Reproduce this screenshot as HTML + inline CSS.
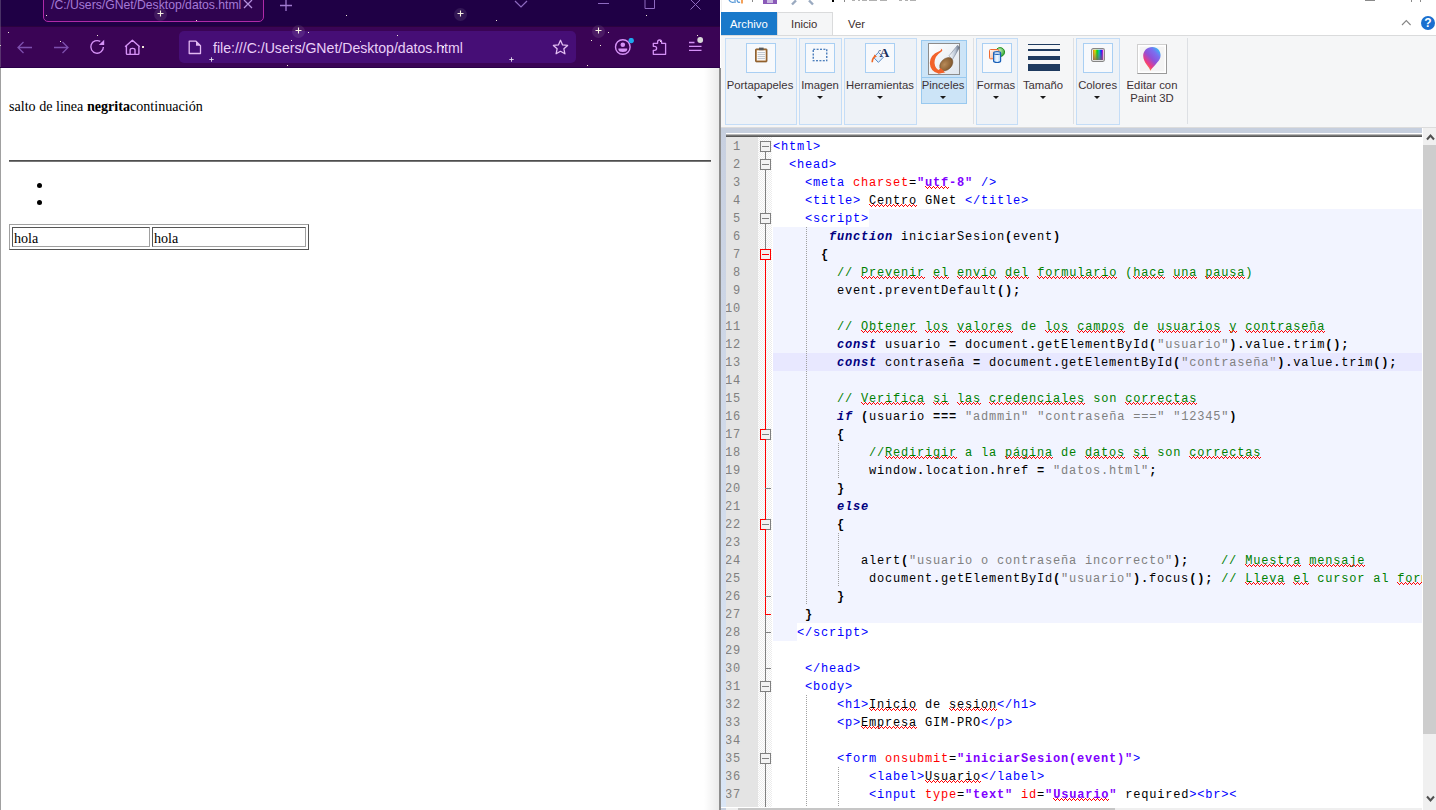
<!DOCTYPE html>
<html><head><meta charset="utf-8"><style>
*{margin:0;padding:0;box-sizing:border-box}
html,body{width:1436px;height:810px;overflow:hidden;background:#fff;position:relative;font-family:"Liberation Sans",sans-serif}
.a{position:absolute}
#br{left:0;top:0;width:720px;height:810px;overflow:hidden;background:#fff}
.tabt{font-size:12.2px;color:#a57ad6;white-space:nowrap}
.urlt{font-size:14.1px;color:#ead0f6;white-space:nowrap;letter-spacing:0px}
.serif{font-family:"Liberation Serif",serif;font-size:14.1px;color:#000;white-space:nowrap;line-height:16px}
.star{background:#fff;width:2px;height:2px}
#pt{left:720px;top:0;width:716px;height:810px;background:#fff;overflow:hidden}
.seg{font-size:11.3px;color:#3c3236;white-space:nowrap;line-height:13px}
.grp{border:1px solid #c4ddf7;background:#eef2f7}
.ib{border:1px solid #a9cff3;background:#f7f9fc}
.arr{width:0;height:0;border-left:3.5px solid transparent;border-right:3.5px solid transparent;border-top:3.5px solid #1a1a1a}
.sep{width:1px;background:#dde0e4}
.ln{position:absolute;left:-6px;width:21px;text-align:right;font-family:"Liberation Mono",monospace;font-size:12px;letter-spacing:0.8px;color:#808080;height:18px;line-height:18px}
.cl{position:absolute;left:773px;font-family:"Liberation Mono",monospace;font-size:12px;letter-spacing:0.8px;height:18px;line-height:18px;white-space:pre;color:#000}
.t{color:#0000ff}.at{color:#ff0000}.ds{color:#8000ff;font-weight:bold}.tx{color:#000}
.kw{color:#000080;font-weight:bold;font-style:italic}.cm{color:#008000}.st{color:#808080}.sy{font-weight:bold;color:#000}.w{color:#000}
.sp{text-decoration:underline wavy #ff0000;text-decoration-thickness:1px;text-underline-offset:2px;text-decoration-skip-ink:none}
</style></head><body>
<div id="br" class="a">
<div class="a" style="left:0px;top:0px;width:720px;height:26px;background:#1f0045"></div>
<div class="a" style="left:0px;top:26px;width:720px;height:42px;background:#3a0455"></div>
<div class="a" style="left:0px;top:26px;width:720px;height:1px;background:#2b023f"></div>
<div class="a" style="left:43px;top:-6px;width:221px;height:28px;border:1.5px solid #b02aa8;border-radius:5px;background:#2e034f"></div>
<div class="a tabt" style="left:51px;top:-2px">/C:/Users/GNet/Desktop/datos.html</div>
<svg class="a" style="left:243px;top:0" width="10" height="10"><path d="M1 0L9 8M9 0L1 8" stroke="#b48fdc" stroke-width="1.3"/></svg>
<svg class="a" style="left:279px;top:0" width="14" height="12"><path d="M7 0V11M1 5.5H13" stroke="#a07ad0" stroke-width="1.3"/></svg>
<svg class="a" style="left:514px;top:0" width="14" height="8"><path d="M1 1L7 7L13 1" fill="none" stroke="#8e6ac0" stroke-width="1.2"/></svg>
<svg class="a" style="left:598px;top:0" width="12" height="6"><path d="M0 3.5H11" stroke="#8e6ac0" stroke-width="1"/></svg>
<svg class="a" style="left:644px;top:0" width="12" height="10"><path d="M1 -1V8.5H10.5V-1" fill="none" stroke="#8e6ac0" stroke-width="1"/></svg>
<svg class="a" style="left:690px;top:0" width="12" height="10"><path d="M0.5 -0.5L10.5 9.5M10.5 -0.5L0.5 9.5" stroke="#8e6ac0" stroke-width="1"/></svg>
<div class="a" style="left:179px;top:31px;width:397px;height:32px;border-radius:5px;background:#460e76"></div>
<div class="a urlt" style="left:213px;top:39.5px">file:///C:/Users/GNet/Desktop/datos.html</div>
<svg class="a" style="left:188px;top:40px" width="14" height="15"><path d="M1.2 1.2H8L12.5 5.7V13.5H1.2Z" fill="none" stroke="#e2b9f2" stroke-width="1.3" stroke-linejoin="round"/><path d="M8 1.2V5.7H12.5Z" fill="#e2b9f2"/></svg>
<svg class="a" style="left:17px;top:41px" width="16" height="13"><path d="M1 6.5H15M6.5 1L1 6.5L6.5 12" fill="none" stroke="#7d4fae" stroke-width="1.3"/></svg>
<svg class="a" style="left:53px;top:41px" width="16" height="13"><path d="M1 6.5H15M9.5 1L15 6.5L9.5 12" fill="none" stroke="#7d4fae" stroke-width="1.3"/></svg>
<svg class="a" style="left:89px;top:39px" width="17" height="17"><path d="M14.4 8A6.3 6.3 0 1 1 11.25 2.45" fill="none" stroke="#d592f6" stroke-width="1.35"/><path d="M9.8 6L15.2 0.8V6Z" fill="#d592f6"/></svg>
<svg class="a" style="left:124px;top:39px" width="17" height="17"><path d="M1.1 7.7L8.4 1.2L15.7 7.7M2.4 6.5V14.6Q2.4 15.4 3.2 15.4H14.1Q14.9 15.4 14.9 14.6V6.5M6.1 15.4V10.9Q6.1 9.4 8.55 9.4Q11 9.4 11 10.9V15.4" fill="none" stroke="#d592f6" stroke-width="1.4" stroke-linejoin="round"/></svg>
<svg class="a" style="left:552px;top:39px" width="17" height="17"><path d="M8.5 1.3L10.6 5.9L15.6 6.4L11.9 9.8L12.9 14.8L8.5 12.3L4.1 14.8L5.1 9.8L1.4 6.4L6.4 5.9Z" fill="none" stroke="#e3bff3" stroke-width="1.3" stroke-linejoin="round"/></svg>
<svg class="a" style="left:614px;top:38px" width="21" height="18"><circle cx="8.8" cy="9" r="7.3" fill="none" stroke="#d592f6" stroke-width="1.4"/><circle cx="8.8" cy="6.7" r="2.3" fill="#d592f6"/><path d="M4.4 10.6H13.2V11.4Q13 13.9 8.8 13.9Q4.6 13.9 4.4 11.4Z" fill="#d592f6"/><circle cx="17.2" cy="2.6" r="2.7" fill="#1ea8ee"/></svg>
<svg class="a" style="left:651px;top:38px" width="17" height="18"><path d="M2.3 5.3H6.6V4A2 2 0 0 1 10.6 4V5.3H14.6V16.3H2.3V12.3H3.6A2 2 0 0 0 3.6 8.3H2.3Z" fill="none" stroke="#d592f6" stroke-width="1.3" stroke-linejoin="round"/></svg>
<svg class="a" style="left:688px;top:37px" width="18" height="16"><path d="M1 5.5H6.5M1 9.3H13.5M1 13.4H13.5" stroke="#d592f6" stroke-width="1.3"/><circle cx="12.2" cy="3" r="2.9" fill="#d8d8d8"/></svg>
<div class="a" style="left:45.9px;top:14.5px;width:1.2px;height:1.2px;background:#f0e8d8"></div>
<div class="a" style="left:154.4px;top:7.8px;width:13px;height:13px;border-radius:50%;background:rgba(255,255,255,0.09)"></div>
<svg class="a" style="left:156.9px;top:10.3px" width="7" height="7"><path d="M3.5 0.5V6.5M0.5 3.5H6.5" stroke="#f4eee0" stroke-width="1.1"/></svg>
<div class="a" style="left:196.2px;top:19.5px;width:1.2px;height:1.2px;background:#f0e8d8"></div>
<div class="a" style="left:292.2px;top:24.6px;width:13px;height:13px;border-radius:50%;background:rgba(255,255,255,0.09)"></div>
<svg class="a" style="left:294.7px;top:27.1px" width="7" height="7"><path d="M3.5 0.5V6.5M0.5 3.5H6.5" stroke="#f4eee0" stroke-width="1.1"/></svg>
<div class="a" style="left:7.5px;top:32.0px;width:1.2px;height:1.2px;background:#f0e8d8"></div>
<div class="a" style="left:96.5px;top:35.0px;width:1.2px;height:1.2px;background:#f0e8d8"></div>
<div class="a" style="left:60.2px;top:40.9px;width:1.2px;height:1.2px;background:#f0e8d8"></div>
<div class="a" style="left:142.4px;top:46.4px;width:1.2px;height:1.2px;background:#f0e8d8"></div>
<div class="a" style="left:290.7px;top:40.0px;width:1.2px;height:1.2px;background:#f0e8d8"></div>
<svg class="a" style="left:208.8px;top:56.9px" width="5" height="5"><path d="M2.5 0.3V4.7M0.3 2.5H4.7" stroke="#e8e0f0" stroke-width="0.9"/></svg>
<div class="a" style="left:286.5px;top:65.2px;width:1.2px;height:1.2px;background:#f0e8d8"></div>
<div class="a" style="left:0.0px;top:45.0px;width:1.2px;height:1.2px;background:#f0e8d8"></div>
<div class="a" style="left:345.9px;top:14.5px;width:1.2px;height:1.2px;background:#f0e8d8"></div>
<div class="a" style="left:454.4px;top:7.8px;width:13px;height:13px;border-radius:50%;background:rgba(255,255,255,0.09)"></div>
<svg class="a" style="left:456.9px;top:10.3px" width="7" height="7"><path d="M3.5 0.5V6.5M0.5 3.5H6.5" stroke="#f4eee0" stroke-width="1.1"/></svg>
<div class="a" style="left:496.2px;top:19.5px;width:1.2px;height:1.2px;background:#f0e8d8"></div>
<div class="a" style="left:592.2px;top:24.6px;width:13px;height:13px;border-radius:50%;background:rgba(255,255,255,0.09)"></div>
<svg class="a" style="left:594.7px;top:27.1px" width="7" height="7"><path d="M3.5 0.5V6.5M0.5 3.5H6.5" stroke="#f4eee0" stroke-width="1.1"/></svg>
<div class="a" style="left:307.5px;top:32.0px;width:1.2px;height:1.2px;background:#f0e8d8"></div>
<div class="a" style="left:396.5px;top:35.0px;width:1.2px;height:1.2px;background:#f0e8d8"></div>
<div class="a" style="left:360.2px;top:40.9px;width:1.2px;height:1.2px;background:#f0e8d8"></div>
<div class="a" style="left:442.4px;top:46.4px;width:1.2px;height:1.2px;background:#f0e8d8"></div>
<div class="a" style="left:590.7px;top:40.0px;width:1.2px;height:1.2px;background:#f0e8d8"></div>
<svg class="a" style="left:508.8px;top:56.9px" width="5" height="5"><path d="M2.5 0.3V4.7M0.3 2.5H4.7" stroke="#e8e0f0" stroke-width="0.9"/></svg>
<div class="a" style="left:586.5px;top:65.2px;width:1.2px;height:1.2px;background:#f0e8d8"></div>
<div class="a" style="left:300.0px;top:45.0px;width:1.2px;height:1.2px;background:#f0e8d8"></div>
<div class="a" style="left:645.9px;top:14.5px;width:1.2px;height:1.2px;background:#f0e8d8"></div>
<div class="a" style="left:607.5px;top:32.0px;width:1.2px;height:1.2px;background:#f0e8d8"></div>
<div class="a" style="left:696.5px;top:35.0px;width:1.2px;height:1.2px;background:#f0e8d8"></div>
<div class="a" style="left:660.2px;top:40.9px;width:1.2px;height:1.2px;background:#f0e8d8"></div>
<div class="a" style="left:600.0px;top:45.0px;width:1.2px;height:1.2px;background:#f0e8d8"></div>
<div class="a" style="left:0px;top:68px;width:720px;height:742px;background:#fff"></div>
<div class="a" style="left:0px;top:68px;width:1.2px;height:742px;background:#a0a0a0"></div>
<div class="a" style="left:0px;top:0px;width:1.2px;height:68px;background:rgba(150,140,160,0.35)"></div>
<div class="a" style="left:0px;top:67px;width:720px;height:1px;background:#2a0049"></div>
<div class="a" style="left:704px;top:68px;width:15px;height:742px;background:linear-gradient(90deg,rgba(0,0,0,0),rgba(0,0,0,0.08))"></div>
<div class="a serif" style="left:9px;top:98px">salto de linea <b>negrita</b>continuación</div>
<div class="a" style="left:9px;top:160px;width:702px;height:2px;border-top:1px solid #4e4e4e;border-bottom:1px solid #777"></div>
<div class="a" style="left:37px;top:183px;width:5px;height:5px;border-radius:50%;background:#000"></div>
<div class="a" style="left:37px;top:200px;width:5px;height:5px;border-radius:50%;background:#000"></div>
<div class="a" style="left:9px;top:224px;width:300px;height:26px;border:1px solid;border-color:#a0a0a0 #555 #555 #a0a0a0"></div>
<div class="a" style="left:12px;top:227px;width:138px;height:20px;border:1px solid;border-color:#555 #a0a0a0 #a0a0a0 #555"></div>
<div class="a" style="left:152px;top:227px;width:154px;height:20px;border:1px solid;border-color:#555 #a0a0a0 #a0a0a0 #555"></div>
<div class="a serif" style="left:14px;top:230px">hola</div>
<div class="a serif" style="left:154px;top:230px">hola</div>
</div>
<div class="a" style="left:720px;top:0px;width:716px;height:810px;background:#fff"></div>
<div class="a" style="left:719px;top:68px;width:1.5px;height:742px;background:#8e8e8e"></div>
<div class="a" style="left:720.5px;top:0px;width:0.5px;height:810px;background:#f0f0f0"></div>
<svg class="a" style="left:728px;top:0" width="18" height="4"><path d="M1 0Q3 3.5 6 2M7 0V3M9 0Q10 3.5 12 2" fill="none" stroke="#5a9ad8" stroke-width="1.3"/><path d="M14 0V3.5" stroke="#f08020" stroke-width="1.5"/></svg>
<div class="a" style="left:752px;top:0px;width:1px;height:2px;background:#888"></div>
<div class="a" style="left:763px;top:0px;width:14px;height:4px;background:#8a5ab8"></div>
<div class="a" style="left:767px;top:0px;width:6px;height:3px;background:#c8b8e0"></div>
<svg class="a" style="left:790px;top:0" width="26" height="6"><path d="M2 4.5L6 0.5M19 0.5L23 4.5" stroke="#9aaac0" stroke-width="2.4"/></svg>
<div class="a" style="left:832px;top:0px;width:2px;height:2px;background:#000"></div>
<div class="a" style="left:844px;top:0px;width:1px;height:2px;background:#888"></div>
<div class="a" style="left:852px;top:0px;width:3px;height:1px;background:#b0b0b0"></div>
<div class="a" style="left:858px;top:0px;width:2px;height:1px;background:#b0b0b0"></div>
<div class="a" style="left:862px;top:0px;width:5px;height:1px;background:#b0b0b0"></div>
<div class="a" style="left:869px;top:0px;width:8px;height:1px;background:#b0b0b0"></div>
<div class="a" style="left:880px;top:0px;width:7px;height:1px;background:#b0b0b0"></div>
<div class="a" style="left:899px;top:0px;width:3px;height:1px;background:#b0b0b0"></div>
<div class="a" style="left:905px;top:0px;width:3px;height:1px;background:#b0b0b0"></div>
<div class="a" style="left:910px;top:0px;width:6px;height:1px;background:#b0b0b0"></div>
<div class="a" style="left:721px;top:12px;width:56px;height:23px;background:#1979ca"></div>
<div class="a seg" style="left:730px;top:18px;color:#fff">Archivo</div>
<div class="a" style="left:777px;top:12px;width:56px;height:24px;background:#f5f6f7;border:1px solid #dadbdc;border-bottom:none"></div>
<div class="a seg" style="left:791px;top:18px;color:#3c2c2c">Inicio</div>
<div class="a seg" style="left:848px;top:18px;color:#3c2c2c">Ver</div>
<svg class="a" style="left:1401px;top:19px" width="11" height="8"><path d="M1 6L5.3 1.6L9.6 6" fill="none" stroke="#858585" stroke-width="1.1"/></svg>
<div class="a" style="left:1365px;top:0px;width:10px;height:1.2px;background:#8a8a8a"></div>
<div class="a" style="left:1411px;top:0px;width:1px;height:1.5px;background:#8a8a8a"></div>
<div class="a" style="left:1420px;top:0px;width:1px;height:1.5px;background:#8a8a8a"></div>
<svg class="a" style="left:1420px;top:15px" width="16" height="16"><circle cx="8" cy="8" r="7" fill="#1a6fcf"/><text x="8" y="12.3" font-family="Liberation Sans" font-weight="bold" font-size="12" fill="#fff" text-anchor="middle">?</text></svg>
<div class="a" style="left:721px;top:35px;width:715px;height:92px;background:#f5f6f7;border-top:1px solid #dadbdc"></div>
<div class="a grp" style="left:725px;top:38px;width:72px;height:87px;"></div>
<div class="a grp" style="left:799px;top:38px;width:43px;height:87px"></div>
<div class="a grp" style="left:844px;top:38px;width:73px;height:87px"></div>
<div class="a grp" style="left:976px;top:38px;width:42px;height:87px"></div>
<div class="a grp" style="left:1076px;top:38px;width:44px;height:87px"></div>
<div class="a sep" style="left:973px;top:38px;height:86px"></div>
<div class="a sep" style="left:1073px;top:38px;height:86px"></div>
<div class="a sep" style="left:1187px;top:38px;height:86px"></div>
<div class="a ib" style="left:746px;top:43px;width:30px;height:30px"></div>
<div class="a ib" style="left:805px;top:43px;width:30px;height:30px"></div>
<div class="a ib" style="left:865px;top:43px;width:30px;height:30px"></div>
<div class="a ib" style="left:982px;top:43px;width:30px;height:30px"></div>
<div class="a ib" style="left:1083px;top:43px;width:30px;height:30px"></div>
<div class="a" style="left:921px;top:40px;width:46px;height:64px;background:#cce4f7;border:1px solid #99c9ef"></div>
<div class="a" style="left:922px;top:77px;width:44px;height:1px;background:#99c9ef"></div>
<div class="a" style="left:928px;top:43px;width:32px;height:32px;background:#f0f0f0;border:1px solid #8a8a8a"></div>
<div class="a seg" style="left:700px;top:79px;width:120px;text-align:center">Portapapeles</div>
<div class="a arr" style="left:756.5px;top:96px"></div>
<div class="a seg" style="left:760px;top:79px;width:120px;text-align:center">Imagen</div>
<div class="a arr" style="left:816.5px;top:96px"></div>
<div class="a seg" style="left:820px;top:79px;width:120px;text-align:center">Herramientas</div>
<div class="a arr" style="left:876.5px;top:96px"></div>
<div class="a seg" style="left:883px;top:79px;width:120px;text-align:center">Pinceles</div>
<div class="a arr" style="left:939.5px;top:96px"></div>
<div class="a seg" style="left:936px;top:79px;width:120px;text-align:center">Formas</div>
<div class="a arr" style="left:992.5px;top:96px"></div>
<div class="a seg" style="left:983px;top:79px;width:120px;text-align:center">Tamaño</div>
<div class="a arr" style="left:1039.5px;top:96px"></div>
<div class="a seg" style="left:1037.6px;top:79px;width:120px;text-align:center">Colores</div>
<div class="a arr" style="left:1094.1px;top:96px"></div>
<div class="a seg" style="left:1092px;top:79px;width:120px;text-align:center">Editar con</div>
<div class="a seg" style="left:1092px;top:92px;width:120px;text-align:center">Paint 3D</div>
<svg class="a" style="left:753px;top:46px" width="16" height="17"><rect x="2.5" y="2.9" width="11.5" height="13" rx="0.8" fill="#a8733a" stroke="#7a4c1c" stroke-width="0.8"/><rect x="3.8" y="4.3" width="8.9" height="10.2" fill="#fdfdfd"/><path d="M4.6 6.6H12M4.6 8.6H12M4.6 10.6H12M4.6 12.6H12" stroke="#a8b4c0" stroke-width="0.8"/><rect x="6" y="1.6" width="4.6" height="2.6" fill="#5a5a5a"/></svg>
<svg class="a" style="left:812px;top:48px" width="16" height="14"><rect x="1.2" y="1.2" width="13.6" height="11.6" fill="none" stroke="#1a5aa8" stroke-width="1.1" stroke-dasharray="2 1.4"/></svg>
<svg class="a" style="left:868px;top:45px" width="22" height="19"><path d="M5.6 12.4L10.4 7.4L15.4 12.2L10.4 17.4Z" fill="#e4f0fc" stroke="#4a7fc0" stroke-width="0.9"/><path d="M10.4 7.4Q10.6 4.6 13 5.6" fill="none" stroke="#4a6a90" stroke-width="0.8"/><path d="M4.2 17.2Q4.4 12.6 7.4 11.2" fill="none" stroke="#f06a28" stroke-width="1.6"/><path d="M6.2 9.4L9 11.4L5.8 12.8Z" fill="#f06a28"/><text x="16.3" y="11.6" font-family="Liberation Serif" font-weight="bold" font-size="13.5" fill="#1c2f5c" text-anchor="middle">A</text></svg>
<svg class="a" style="left:928px;top:43px" width="32" height="32"><defs><linearGradient id="bb" x1="0" y1="0" x2="1" y2="1"><stop offset="0" stop-color="#ffffff"/><stop offset="1" stop-color="#dfe6ee"/></linearGradient><linearGradient id="hd" x1="0" y1="0" x2="1" y2="0"><stop offset="0" stop-color="#ffffff"/><stop offset="0.6" stop-color="#b8c4d4"/><stop offset="1" stop-color="#5a6478"/></linearGradient><radialGradient id="bh" cx="0.4" cy="0.4" r="0.7"><stop offset="0" stop-color="#b88a58"/><stop offset="1" stop-color="#7a5228"/></radialGradient></defs><rect x="0.5" y="0.5" width="31" height="31" fill="url(#bb)" stroke="#8c8c8c"/><path d="M12.8 5.4Q16 7.2 12.6 9.2Q6.5 13 6.5 20Q7 26 12 27.5L17.5 29.5L10.5 30.5Q2.2 28.5 1.8 20Q2 11.5 11.2 8.2Q13.8 7.2 12.8 5.4Z" fill="#f2622a"/><path d="M21 12.8L29.6 2.2L31.6 4.4L24.4 16.6Z" fill="url(#hd)" stroke="#6a7488" stroke-width="0.5"/><ellipse cx="18.3" cy="21.2" rx="7.6" ry="5.4" transform="rotate(-45 18.3 21.2)" fill="url(#bh)" stroke="#6a4420" stroke-width="0.5"/><path d="M10.5 30.5Q14 30.5 16.5 28.5L12.5 25Q10.5 28 8.5 28.6Z" fill="#f2622a"/></svg>
<svg class="a" style="left:988px;top:46px" width="18" height="18"><defs><radialGradient id="gs" cx="0.35" cy="0.35" r="0.7"><stop offset="0" stop-color="#d8f8d0"/><stop offset="1" stop-color="#30a830"/></radialGradient><linearGradient id="os" x1="0" y1="0" x2="1" y2="1"><stop offset="0" stop-color="#ffffff"/><stop offset="1" stop-color="#f8a070"/></linearGradient><linearGradient id="bs" x1="0" y1="0" x2="1" y2="0"><stop offset="0" stop-color="#a8d0f8"/><stop offset="0.5" stop-color="#f4faff"/><stop offset="1" stop-color="#a8d0f8"/></linearGradient></defs><circle cx="12.1" cy="6.1" r="4.5" fill="url(#gs)" stroke="#1a8a1a" stroke-width="0.9"/><rect x="1.5" y="3.5" width="9.3" height="9.3" rx="1" fill="url(#os)" stroke="#f06a30" stroke-width="1"/><path d="M5.6 7V15.1A3.5 1.4 0 0 0 12.6 15.1V7" fill="url(#bs)" stroke="#1a60b8" stroke-width="1.2"/><ellipse cx="9.1" cy="7" rx="3.5" ry="1.4" fill="#f4faff" stroke="#1a60b8" stroke-width="1.1"/></svg>
<div class="a" style="left:1028px;top:44px;width:32px;height:1px;background:#1e3a5f"></div>
<div class="a" style="left:1028px;top:49px;width:32px;height:2px;background:#1e3a5f"></div>
<div class="a" style="left:1028px;top:56px;width:32px;height:4px;background:#1e3a5f"></div>
<div class="a" style="left:1028px;top:64px;width:32px;height:7px;background:#1e3a5f"></div>
<svg class="a" style="left:1091px;top:48px" width="14" height="14"><defs><linearGradient id="cg"><stop offset="0" stop-color="#f07a00"/><stop offset="0.2" stop-color="#e8e800"/><stop offset="0.4" stop-color="#00d800"/><stop offset="0.6" stop-color="#00c8c8"/><stop offset="0.8" stop-color="#0020ff"/><stop offset="1" stop-color="#ff00d0"/></linearGradient><linearGradient id="cg2" x1="0" y1="0" x2="0" y2="1"><stop offset="0" stop-color="#808080" stop-opacity="0"/><stop offset="1" stop-color="#806060" stop-opacity="0.75"/></linearGradient></defs><rect x="0.6" y="0.6" width="12.8" height="12.8" rx="1.6" fill="#fff" stroke="#858585" stroke-width="1.1"/><rect x="2" y="1.8" width="10.2" height="10.2" fill="url(#cg)"/><rect x="2" y="1.8" width="10.2" height="10.2" fill="url(#cg2)"/></svg>
<div class="a" style="left:1137px;top:44px;width:30px;height:30px;background:#f4f4f4;border:1px solid #d0d0d0;border-right-color:#9a9a9a;border-bottom-color:#9a9a9a;box-shadow:inset 0 0 0 1.5px #fff"></div>
<svg class="a" style="left:1142px;top:46px" width="20" height="26"><defs><linearGradient id="pg" x1="1" y1="0" x2="0.2" y2="1"><stop offset="0" stop-color="#10e8f8"/><stop offset="0.3" stop-color="#7a70f0"/><stop offset="0.55" stop-color="#9050d8"/><stop offset="0.78" stop-color="#f03a80"/><stop offset="1" stop-color="#ffb000"/></linearGradient></defs><path d="M10.2 0.9C15.6 0.9 18.6 5 18.6 9.2C18.6 14.6 13.5 17.6 8.2 24.8C7.8 21 1.2 17 1.2 9.8C1.2 4.8 5 0.9 10.2 0.9Z" fill="url(#pg)"/></svg>
<div class="a" style="left:721px;top:127px;width:715px;height:1px;background:#dcdcdc"></div>
<div class="a" style="left:721px;top:128px;width:715px;height:682px;background:#c6cfde"></div>
<div class="a" style="left:726px;top:133px;width:710px;height:677px;background:#fff"></div>
<div class="a" style="left:726px;top:134px;width:696px;height:1px;background:#b8b8b8"></div>
<div class="a" style="left:726px;top:135px;width:696px;height:1px;background:#777"></div>
<div class="a" style="left:726px;top:136px;width:696px;height:1px;background:#585858"></div>
<div class="a" style="left:721px;top:133px;width:5px;height:674px;background:linear-gradient(#c8d0e0,#dae6f6)"></div>
<div class="a" style="left:726px;top:137px;width:32px;height:670px;background:#e4e4e4"></div>
<div class="a" style="left:758px;top:137px;width:14px;height:670px;background-color:#fff;background-image:linear-gradient(45deg,#ececec 25%,transparent 25%,transparent 75%,#ececec 75%),linear-gradient(45deg,#ececec 25%,transparent 25%,transparent 75%,#ececec 75%);background-size:2px 2px;background-position:0 0,1px 1px"></div>
<div class="a" style="left:869px;top:209px;width:553px;height:18px;background:#f2f4ff"></div>
<div class="a" style="left:773px;top:227px;width:649px;height:396px;background:#f2f4ff"></div>
<div class="a" style="left:773px;top:623px;width:24px;height:18px;background:#f2f4ff"></div>
<div class="a" style="left:773px;top:353px;width:649px;height:18px;background:#e8e8ff"></div>
<div class="a" style="left:806px;top:227px;width:1px;height:378px;background-image:linear-gradient(#a0a0a0 50%,transparent 50%);background-size:1px 2px"></div>
<div class="a" style="left:838px;top:443px;width:1px;height:36px;background-image:linear-gradient(#a0a0a0 50%,transparent 50%);background-size:1px 2px"></div>
<div class="a" style="left:838px;top:533px;width:1px;height:54px;background-image:linear-gradient(#a0a0a0 50%,transparent 50%);background-size:1px 2px"></div>
<div class="a" style="left:806px;top:695px;width:1px;height:126px;background-image:linear-gradient(#a0a0a0 50%,transparent 50%);background-size:1px 2px"></div>
<div class="a" style="left:838px;top:767px;width:1px;height:54px;background-image:linear-gradient(#a0a0a0 50%,transparent 50%);background-size:1px 2px"></div>
<div class="a" style="left:765px;top:152px;width:1px;height:655px;background:#808080"></div>
<div class="a" style="left:765px;top:260px;width:1px;height:354px;background:#ff0000"></div>
<div class="a" style="left:765px;top:614px;width:6px;height:1px;background:#ff0000"></div>
<div class="a" style="left:760px;top:141px;width:11px;height:11px;border:1px solid #808080;background:#f3f3f3"></div>
<div class="a" style="left:762px;top:146px;width:7px;height:1px;background:#808080"></div>
<div class="a" style="left:760px;top:159px;width:11px;height:11px;border:1px solid #808080;background:#f3f3f3"></div>
<div class="a" style="left:762px;top:164px;width:7px;height:1px;background:#808080"></div>
<div class="a" style="left:760px;top:213px;width:11px;height:11px;border:1px solid #808080;background:#f3f3f3"></div>
<div class="a" style="left:762px;top:218px;width:7px;height:1px;background:#808080"></div>
<div class="a" style="left:760px;top:681px;width:11px;height:11px;border:1px solid #808080;background:#f3f3f3"></div>
<div class="a" style="left:762px;top:686px;width:7px;height:1px;background:#808080"></div>
<div class="a" style="left:760px;top:753px;width:11px;height:11px;border:1px solid #808080;background:#f3f3f3"></div>
<div class="a" style="left:762px;top:758px;width:7px;height:1px;background:#808080"></div>
<div class="a" style="left:760px;top:249px;width:11px;height:11px;border:1px solid #ff0000;background:#f3f3f3"></div>
<div class="a" style="left:762px;top:254px;width:7px;height:1px;background:#ff0000"></div>
<div class="a" style="left:760px;top:429px;width:11px;height:11px;border:1px solid #808080;background:#f3f3f3"></div>
<div class="a" style="left:762px;top:434px;width:7px;height:1px;background:#808080"></div>
<div class="a" style="left:760px;top:519px;width:11px;height:11px;border:1px solid #808080;background:#f3f3f3"></div>
<div class="a" style="left:762px;top:524px;width:7px;height:1px;background:#808080"></div>
<div class="a" style="left:760px;top:429px;width:6px;height:11px;border:1px solid #ff0000;border-right:none"></div>
<div class="a" style="left:765px;top:425px;width:1px;height:4px;background:#ff0000"></div>
<div class="a" style="left:760px;top:519px;width:6px;height:11px;border:1px solid #ff0000;border-right:none"></div>
<div class="a" style="left:765px;top:515px;width:1px;height:4px;background:#ff0000"></div>
<div class="a" style="left:765px;top:488px;width:6px;height:1px;background:#808080"></div>
<div class="a" style="left:765px;top:596px;width:6px;height:1px;background:#808080"></div>
<div class="a" style="left:765px;top:632px;width:6px;height:1px;background:#808080"></div>
<div class="a" style="left:765px;top:668px;width:6px;height:1px;background:#808080"></div>
<div class="a" style="left:726px;top:137px;width:696px;height:670px;overflow:hidden">
<div class="ln" style="top:1px">1</div>
<div class="cl" style="top:1px;left:47px"><span class="t">&lt;html&gt;</span></div>
<div class="ln" style="top:19px">2</div>
<div class="cl" style="top:19px;left:63px"><span class="t">&lt;head&gt;</span></div>
<div class="ln" style="top:37px">3</div>
<div class="cl" style="top:37px;left:79px"><span class="t">&lt;meta </span><span class="at">charset</span><span class="tx">=</span><span class="ds">&quot;</span><span class="ds">utf</span><span class="ds">-8&quot;</span><span class="t"> /&gt;</span></div>
<div class="a" style="left:199px;top:49px;width:24px;height:3px;background:linear-gradient(90deg,#f00 1px,transparent 1px) 0 0/4px 1px repeat-x,linear-gradient(90deg,transparent 1px,#f00 1px,#f00 2px,transparent 2px,transparent 3px,#f00 3px) 0 1px/4px 1px repeat-x,linear-gradient(90deg,transparent 2px,#f00 2px,#f00 3px,transparent 3px) 0 2px/4px 1px repeat-x"></div>
<div class="ln" style="top:55px">4</div>
<div class="cl" style="top:55px;left:79px"><span class="t">&lt;title&gt;</span><span class="tx"> </span><span class="tx">Centro</span><span class="tx"> GNet </span><span class="t">&lt;/title&gt;</span></div>
<div class="a" style="left:143px;top:67px;width:48px;height:3px;background:linear-gradient(90deg,#f00 1px,transparent 1px) 0 0/4px 1px repeat-x,linear-gradient(90deg,transparent 1px,#f00 1px,#f00 2px,transparent 2px,transparent 3px,#f00 3px) 0 1px/4px 1px repeat-x,linear-gradient(90deg,transparent 2px,#f00 2px,#f00 3px,transparent 3px) 0 2px/4px 1px repeat-x"></div>
<div class="ln" style="top:73px">5</div>
<div class="cl" style="top:73px;left:79px"><span class="t">&lt;script&gt;</span></div>
<div class="ln" style="top:91px">6</div>
<div class="cl" style="top:91px;left:103px"><span class="kw">function</span><span class="w"> iniciarSesion</span><span class="sy">(</span><span class="w">event</span><span class="sy">)</span></div>
<div class="ln" style="top:109px">7</div>
<div class="cl" style="top:109px;left:95px"><span class="sy">{</span></div>
<div class="ln" style="top:127px">8</div>
<div class="cl" style="top:127px;left:111px"><span class="cm">// </span><span class="cm">Prevenir</span><span class="cm"> </span><span class="cm">el</span><span class="cm"> </span><span class="cm">envío</span><span class="cm"> </span><span class="cm">del</span><span class="cm"> </span><span class="cm">formulario</span><span class="cm"> (</span><span class="cm">hace</span><span class="cm"> </span><span class="cm">una</span><span class="cm"> </span><span class="cm">pausa</span><span class="cm">)</span></div>
<div class="a" style="left:135px;top:139px;width:64px;height:3px;background:linear-gradient(90deg,#f00 1px,transparent 1px) 0 0/4px 1px repeat-x,linear-gradient(90deg,transparent 1px,#f00 1px,#f00 2px,transparent 2px,transparent 3px,#f00 3px) 0 1px/4px 1px repeat-x,linear-gradient(90deg,transparent 2px,#f00 2px,#f00 3px,transparent 3px) 0 2px/4px 1px repeat-x"></div>
<div class="a" style="left:207px;top:139px;width:16px;height:3px;background:linear-gradient(90deg,#f00 1px,transparent 1px) 0 0/4px 1px repeat-x,linear-gradient(90deg,transparent 1px,#f00 1px,#f00 2px,transparent 2px,transparent 3px,#f00 3px) 0 1px/4px 1px repeat-x,linear-gradient(90deg,transparent 2px,#f00 2px,#f00 3px,transparent 3px) 0 2px/4px 1px repeat-x"></div>
<div class="a" style="left:231px;top:139px;width:40px;height:3px;background:linear-gradient(90deg,#f00 1px,transparent 1px) 0 0/4px 1px repeat-x,linear-gradient(90deg,transparent 1px,#f00 1px,#f00 2px,transparent 2px,transparent 3px,#f00 3px) 0 1px/4px 1px repeat-x,linear-gradient(90deg,transparent 2px,#f00 2px,#f00 3px,transparent 3px) 0 2px/4px 1px repeat-x"></div>
<div class="a" style="left:279px;top:139px;width:24px;height:3px;background:linear-gradient(90deg,#f00 1px,transparent 1px) 0 0/4px 1px repeat-x,linear-gradient(90deg,transparent 1px,#f00 1px,#f00 2px,transparent 2px,transparent 3px,#f00 3px) 0 1px/4px 1px repeat-x,linear-gradient(90deg,transparent 2px,#f00 2px,#f00 3px,transparent 3px) 0 2px/4px 1px repeat-x"></div>
<div class="a" style="left:311px;top:139px;width:80px;height:3px;background:linear-gradient(90deg,#f00 1px,transparent 1px) 0 0/4px 1px repeat-x,linear-gradient(90deg,transparent 1px,#f00 1px,#f00 2px,transparent 2px,transparent 3px,#f00 3px) 0 1px/4px 1px repeat-x,linear-gradient(90deg,transparent 2px,#f00 2px,#f00 3px,transparent 3px) 0 2px/4px 1px repeat-x"></div>
<div class="a" style="left:407px;top:139px;width:32px;height:3px;background:linear-gradient(90deg,#f00 1px,transparent 1px) 0 0/4px 1px repeat-x,linear-gradient(90deg,transparent 1px,#f00 1px,#f00 2px,transparent 2px,transparent 3px,#f00 3px) 0 1px/4px 1px repeat-x,linear-gradient(90deg,transparent 2px,#f00 2px,#f00 3px,transparent 3px) 0 2px/4px 1px repeat-x"></div>
<div class="a" style="left:447px;top:139px;width:24px;height:3px;background:linear-gradient(90deg,#f00 1px,transparent 1px) 0 0/4px 1px repeat-x,linear-gradient(90deg,transparent 1px,#f00 1px,#f00 2px,transparent 2px,transparent 3px,#f00 3px) 0 1px/4px 1px repeat-x,linear-gradient(90deg,transparent 2px,#f00 2px,#f00 3px,transparent 3px) 0 2px/4px 1px repeat-x"></div>
<div class="a" style="left:479px;top:139px;width:40px;height:3px;background:linear-gradient(90deg,#f00 1px,transparent 1px) 0 0/4px 1px repeat-x,linear-gradient(90deg,transparent 1px,#f00 1px,#f00 2px,transparent 2px,transparent 3px,#f00 3px) 0 1px/4px 1px repeat-x,linear-gradient(90deg,transparent 2px,#f00 2px,#f00 3px,transparent 3px) 0 2px/4px 1px repeat-x"></div>
<div class="ln" style="top:145px">9</div>
<div class="cl" style="top:145px;left:111px"><span class="w">event</span><span class="sy">.</span><span class="w">preventDefault</span><span class="sy">();</span></div>
<div class="ln" style="top:163px">10</div>
<div class="cl" style="top:163px;left:47px"></div>
<div class="ln" style="top:181px">11</div>
<div class="cl" style="top:181px;left:111px"><span class="cm">// </span><span class="cm">Obtener</span><span class="cm"> </span><span class="cm">los</span><span class="cm"> </span><span class="cm">valores</span><span class="cm"> de </span><span class="cm">los</span><span class="cm"> </span><span class="cm">campos</span><span class="cm"> de </span><span class="cm">usuarios</span><span class="cm"> </span><span class="cm">y</span><span class="cm"> </span><span class="cm">contraseña</span></div>
<div class="a" style="left:135px;top:193px;width:56px;height:3px;background:linear-gradient(90deg,#f00 1px,transparent 1px) 0 0/4px 1px repeat-x,linear-gradient(90deg,transparent 1px,#f00 1px,#f00 2px,transparent 2px,transparent 3px,#f00 3px) 0 1px/4px 1px repeat-x,linear-gradient(90deg,transparent 2px,#f00 2px,#f00 3px,transparent 3px) 0 2px/4px 1px repeat-x"></div>
<div class="a" style="left:199px;top:193px;width:24px;height:3px;background:linear-gradient(90deg,#f00 1px,transparent 1px) 0 0/4px 1px repeat-x,linear-gradient(90deg,transparent 1px,#f00 1px,#f00 2px,transparent 2px,transparent 3px,#f00 3px) 0 1px/4px 1px repeat-x,linear-gradient(90deg,transparent 2px,#f00 2px,#f00 3px,transparent 3px) 0 2px/4px 1px repeat-x"></div>
<div class="a" style="left:231px;top:193px;width:56px;height:3px;background:linear-gradient(90deg,#f00 1px,transparent 1px) 0 0/4px 1px repeat-x,linear-gradient(90deg,transparent 1px,#f00 1px,#f00 2px,transparent 2px,transparent 3px,#f00 3px) 0 1px/4px 1px repeat-x,linear-gradient(90deg,transparent 2px,#f00 2px,#f00 3px,transparent 3px) 0 2px/4px 1px repeat-x"></div>
<div class="a" style="left:319px;top:193px;width:24px;height:3px;background:linear-gradient(90deg,#f00 1px,transparent 1px) 0 0/4px 1px repeat-x,linear-gradient(90deg,transparent 1px,#f00 1px,#f00 2px,transparent 2px,transparent 3px,#f00 3px) 0 1px/4px 1px repeat-x,linear-gradient(90deg,transparent 2px,#f00 2px,#f00 3px,transparent 3px) 0 2px/4px 1px repeat-x"></div>
<div class="a" style="left:351px;top:193px;width:48px;height:3px;background:linear-gradient(90deg,#f00 1px,transparent 1px) 0 0/4px 1px repeat-x,linear-gradient(90deg,transparent 1px,#f00 1px,#f00 2px,transparent 2px,transparent 3px,#f00 3px) 0 1px/4px 1px repeat-x,linear-gradient(90deg,transparent 2px,#f00 2px,#f00 3px,transparent 3px) 0 2px/4px 1px repeat-x"></div>
<div class="a" style="left:431px;top:193px;width:64px;height:3px;background:linear-gradient(90deg,#f00 1px,transparent 1px) 0 0/4px 1px repeat-x,linear-gradient(90deg,transparent 1px,#f00 1px,#f00 2px,transparent 2px,transparent 3px,#f00 3px) 0 1px/4px 1px repeat-x,linear-gradient(90deg,transparent 2px,#f00 2px,#f00 3px,transparent 3px) 0 2px/4px 1px repeat-x"></div>
<div class="a" style="left:503px;top:193px;width:8px;height:3px;background:linear-gradient(90deg,#f00 1px,transparent 1px) 0 0/4px 1px repeat-x,linear-gradient(90deg,transparent 1px,#f00 1px,#f00 2px,transparent 2px,transparent 3px,#f00 3px) 0 1px/4px 1px repeat-x,linear-gradient(90deg,transparent 2px,#f00 2px,#f00 3px,transparent 3px) 0 2px/4px 1px repeat-x"></div>
<div class="a" style="left:519px;top:193px;width:80px;height:3px;background:linear-gradient(90deg,#f00 1px,transparent 1px) 0 0/4px 1px repeat-x,linear-gradient(90deg,transparent 1px,#f00 1px,#f00 2px,transparent 2px,transparent 3px,#f00 3px) 0 1px/4px 1px repeat-x,linear-gradient(90deg,transparent 2px,#f00 2px,#f00 3px,transparent 3px) 0 2px/4px 1px repeat-x"></div>
<div class="ln" style="top:199px">12</div>
<div class="cl" style="top:199px;left:111px"><span class="kw">const</span><span class="w"> usuario </span><span class="sy">=</span><span class="w"> document</span><span class="sy">.</span><span class="w">getElementById</span><span class="sy">(</span><span class="st">&quot;usuario&quot;</span><span class="sy">).</span><span class="w">value</span><span class="sy">.</span><span class="w">trim</span><span class="sy">();</span></div>
<div class="ln" style="top:217px">13</div>
<div class="cl" style="top:217px;left:111px"><span class="kw">const</span><span class="w"> contraseña </span><span class="sy">=</span><span class="w"> document</span><span class="sy">.</span><span class="w">getElementById</span><span class="sy">(</span><span class="st">&quot;contraseña&quot;</span><span class="sy">).</span><span class="w">value</span><span class="sy">.</span><span class="w">trim</span><span class="sy">();</span></div>
<div class="ln" style="top:235px">14</div>
<div class="cl" style="top:235px;left:47px"></div>
<div class="ln" style="top:253px">15</div>
<div class="cl" style="top:253px;left:111px"><span class="cm">// </span><span class="cm">Verifica</span><span class="cm"> </span><span class="cm">si</span><span class="cm"> </span><span class="cm">las</span><span class="cm"> </span><span class="cm">credenciales</span><span class="cm"> son </span><span class="cm">correctas</span></div>
<div class="a" style="left:135px;top:265px;width:64px;height:3px;background:linear-gradient(90deg,#f00 1px,transparent 1px) 0 0/4px 1px repeat-x,linear-gradient(90deg,transparent 1px,#f00 1px,#f00 2px,transparent 2px,transparent 3px,#f00 3px) 0 1px/4px 1px repeat-x,linear-gradient(90deg,transparent 2px,#f00 2px,#f00 3px,transparent 3px) 0 2px/4px 1px repeat-x"></div>
<div class="a" style="left:207px;top:265px;width:16px;height:3px;background:linear-gradient(90deg,#f00 1px,transparent 1px) 0 0/4px 1px repeat-x,linear-gradient(90deg,transparent 1px,#f00 1px,#f00 2px,transparent 2px,transparent 3px,#f00 3px) 0 1px/4px 1px repeat-x,linear-gradient(90deg,transparent 2px,#f00 2px,#f00 3px,transparent 3px) 0 2px/4px 1px repeat-x"></div>
<div class="a" style="left:231px;top:265px;width:24px;height:3px;background:linear-gradient(90deg,#f00 1px,transparent 1px) 0 0/4px 1px repeat-x,linear-gradient(90deg,transparent 1px,#f00 1px,#f00 2px,transparent 2px,transparent 3px,#f00 3px) 0 1px/4px 1px repeat-x,linear-gradient(90deg,transparent 2px,#f00 2px,#f00 3px,transparent 3px) 0 2px/4px 1px repeat-x"></div>
<div class="a" style="left:263px;top:265px;width:96px;height:3px;background:linear-gradient(90deg,#f00 1px,transparent 1px) 0 0/4px 1px repeat-x,linear-gradient(90deg,transparent 1px,#f00 1px,#f00 2px,transparent 2px,transparent 3px,#f00 3px) 0 1px/4px 1px repeat-x,linear-gradient(90deg,transparent 2px,#f00 2px,#f00 3px,transparent 3px) 0 2px/4px 1px repeat-x"></div>
<div class="a" style="left:399px;top:265px;width:72px;height:3px;background:linear-gradient(90deg,#f00 1px,transparent 1px) 0 0/4px 1px repeat-x,linear-gradient(90deg,transparent 1px,#f00 1px,#f00 2px,transparent 2px,transparent 3px,#f00 3px) 0 1px/4px 1px repeat-x,linear-gradient(90deg,transparent 2px,#f00 2px,#f00 3px,transparent 3px) 0 2px/4px 1px repeat-x"></div>
<div class="ln" style="top:271px">16</div>
<div class="cl" style="top:271px;left:111px"><span class="kw">if</span><span class="w"> </span><span class="sy">(</span><span class="w">usuario </span><span class="sy">===</span><span class="w"> </span><span class="st">&quot;admmin&quot;</span><span class="w"> </span><span class="st">&quot;contraseña ===&quot;</span><span class="w"> </span><span class="st">&quot;12345&quot;</span><span class="sy">)</span></div>
<div class="ln" style="top:289px">17</div>
<div class="cl" style="top:289px;left:111px"><span class="sy">{</span></div>
<div class="ln" style="top:307px">18</div>
<div class="cl" style="top:307px;left:143px"><span class="cm">//</span><span class="cm">Redirigir</span><span class="cm"> a la </span><span class="cm">página</span><span class="cm"> de </span><span class="cm">datos</span><span class="cm"> </span><span class="cm">si</span><span class="cm"> son </span><span class="cm">correctas</span></div>
<div class="a" style="left:159px;top:319px;width:72px;height:3px;background:linear-gradient(90deg,#f00 1px,transparent 1px) 0 0/4px 1px repeat-x,linear-gradient(90deg,transparent 1px,#f00 1px,#f00 2px,transparent 2px,transparent 3px,#f00 3px) 0 1px/4px 1px repeat-x,linear-gradient(90deg,transparent 2px,#f00 2px,#f00 3px,transparent 3px) 0 2px/4px 1px repeat-x"></div>
<div class="a" style="left:279px;top:319px;width:48px;height:3px;background:linear-gradient(90deg,#f00 1px,transparent 1px) 0 0/4px 1px repeat-x,linear-gradient(90deg,transparent 1px,#f00 1px,#f00 2px,transparent 2px,transparent 3px,#f00 3px) 0 1px/4px 1px repeat-x,linear-gradient(90deg,transparent 2px,#f00 2px,#f00 3px,transparent 3px) 0 2px/4px 1px repeat-x"></div>
<div class="a" style="left:359px;top:319px;width:40px;height:3px;background:linear-gradient(90deg,#f00 1px,transparent 1px) 0 0/4px 1px repeat-x,linear-gradient(90deg,transparent 1px,#f00 1px,#f00 2px,transparent 2px,transparent 3px,#f00 3px) 0 1px/4px 1px repeat-x,linear-gradient(90deg,transparent 2px,#f00 2px,#f00 3px,transparent 3px) 0 2px/4px 1px repeat-x"></div>
<div class="a" style="left:407px;top:319px;width:16px;height:3px;background:linear-gradient(90deg,#f00 1px,transparent 1px) 0 0/4px 1px repeat-x,linear-gradient(90deg,transparent 1px,#f00 1px,#f00 2px,transparent 2px,transparent 3px,#f00 3px) 0 1px/4px 1px repeat-x,linear-gradient(90deg,transparent 2px,#f00 2px,#f00 3px,transparent 3px) 0 2px/4px 1px repeat-x"></div>
<div class="a" style="left:463px;top:319px;width:72px;height:3px;background:linear-gradient(90deg,#f00 1px,transparent 1px) 0 0/4px 1px repeat-x,linear-gradient(90deg,transparent 1px,#f00 1px,#f00 2px,transparent 2px,transparent 3px,#f00 3px) 0 1px/4px 1px repeat-x,linear-gradient(90deg,transparent 2px,#f00 2px,#f00 3px,transparent 3px) 0 2px/4px 1px repeat-x"></div>
<div class="ln" style="top:325px">19</div>
<div class="cl" style="top:325px;left:143px"><span class="w">window</span><span class="sy">.</span><span class="w">location</span><span class="sy">.</span><span class="w">href </span><span class="sy">=</span><span class="w"> </span><span class="st">&quot;datos.html&quot;</span><span class="sy">;</span></div>
<div class="ln" style="top:343px">20</div>
<div class="cl" style="top:343px;left:111px"><span class="sy">}</span></div>
<div class="ln" style="top:361px">21</div>
<div class="cl" style="top:361px;left:111px"><span class="kw">else</span></div>
<div class="ln" style="top:379px">22</div>
<div class="cl" style="top:379px;left:111px"><span class="sy">{</span></div>
<div class="ln" style="top:397px">23</div>
<div class="cl" style="top:397px;left:47px"></div>
<div class="ln" style="top:415px">24</div>
<div class="cl" style="top:415px;left:135px"><span class="w">alert</span><span class="sy">(</span><span class="st">&quot;usuario o contraseña incorrecto&quot;</span><span class="sy">);</span><span class="w">    </span><span class="cm">// </span><span class="cm">Muestra</span><span class="cm"> </span><span class="cm">mensaje</span></div>
<div class="a" style="left:519px;top:427px;width:56px;height:3px;background:linear-gradient(90deg,#f00 1px,transparent 1px) 0 0/4px 1px repeat-x,linear-gradient(90deg,transparent 1px,#f00 1px,#f00 2px,transparent 2px,transparent 3px,#f00 3px) 0 1px/4px 1px repeat-x,linear-gradient(90deg,transparent 2px,#f00 2px,#f00 3px,transparent 3px) 0 2px/4px 1px repeat-x"></div>
<div class="a" style="left:583px;top:427px;width:56px;height:3px;background:linear-gradient(90deg,#f00 1px,transparent 1px) 0 0/4px 1px repeat-x,linear-gradient(90deg,transparent 1px,#f00 1px,#f00 2px,transparent 2px,transparent 3px,#f00 3px) 0 1px/4px 1px repeat-x,linear-gradient(90deg,transparent 2px,#f00 2px,#f00 3px,transparent 3px) 0 2px/4px 1px repeat-x"></div>
<div class="ln" style="top:433px">25</div>
<div class="cl" style="top:433px;left:143px"><span class="w">document</span><span class="sy">.</span><span class="w">getElementById</span><span class="sy">(</span><span class="st">&quot;usuario&quot;</span><span class="sy">).</span><span class="w">focus</span><span class="sy">();</span><span class="w"> </span><span class="cm">// </span><span class="cm">Lleva</span><span class="cm"> </span><span class="cm">el</span><span class="cm"> cursor al </span><span class="cm">formulario</span></div>
<div class="a" style="left:519px;top:445px;width:40px;height:3px;background:linear-gradient(90deg,#f00 1px,transparent 1px) 0 0/4px 1px repeat-x,linear-gradient(90deg,transparent 1px,#f00 1px,#f00 2px,transparent 2px,transparent 3px,#f00 3px) 0 1px/4px 1px repeat-x,linear-gradient(90deg,transparent 2px,#f00 2px,#f00 3px,transparent 3px) 0 2px/4px 1px repeat-x"></div>
<div class="a" style="left:567px;top:445px;width:16px;height:3px;background:linear-gradient(90deg,#f00 1px,transparent 1px) 0 0/4px 1px repeat-x,linear-gradient(90deg,transparent 1px,#f00 1px,#f00 2px,transparent 2px,transparent 3px,#f00 3px) 0 1px/4px 1px repeat-x,linear-gradient(90deg,transparent 2px,#f00 2px,#f00 3px,transparent 3px) 0 2px/4px 1px repeat-x"></div>
<div class="a" style="left:671px;top:445px;width:80px;height:3px;background:linear-gradient(90deg,#f00 1px,transparent 1px) 0 0/4px 1px repeat-x,linear-gradient(90deg,transparent 1px,#f00 1px,#f00 2px,transparent 2px,transparent 3px,#f00 3px) 0 1px/4px 1px repeat-x,linear-gradient(90deg,transparent 2px,#f00 2px,#f00 3px,transparent 3px) 0 2px/4px 1px repeat-x"></div>
<div class="ln" style="top:451px">26</div>
<div class="cl" style="top:451px;left:111px"><span class="sy">}</span></div>
<div class="ln" style="top:469px">27</div>
<div class="cl" style="top:469px;left:79px"><span class="sy">}</span></div>
<div class="ln" style="top:487px">28</div>
<div class="cl" style="top:487px;left:71px"><span class="t">&lt;/script&gt;</span></div>
<div class="ln" style="top:505px">29</div>
<div class="cl" style="top:505px;left:47px"></div>
<div class="ln" style="top:523px">30</div>
<div class="cl" style="top:523px;left:79px"><span class="t">&lt;/head&gt;</span></div>
<div class="ln" style="top:541px">31</div>
<div class="cl" style="top:541px;left:79px"><span class="t">&lt;body&gt;</span></div>
<div class="ln" style="top:559px">32</div>
<div class="cl" style="top:559px;left:111px"><span class="t">&lt;h1&gt;</span><span class="tx">Inicio</span><span class="tx"> de </span><span class="tx">sesion</span><span class="t">&lt;/h1&gt;</span></div>
<div class="a" style="left:143px;top:571px;width:48px;height:3px;background:linear-gradient(90deg,#f00 1px,transparent 1px) 0 0/4px 1px repeat-x,linear-gradient(90deg,transparent 1px,#f00 1px,#f00 2px,transparent 2px,transparent 3px,#f00 3px) 0 1px/4px 1px repeat-x,linear-gradient(90deg,transparent 2px,#f00 2px,#f00 3px,transparent 3px) 0 2px/4px 1px repeat-x"></div>
<div class="a" style="left:223px;top:571px;width:48px;height:3px;background:linear-gradient(90deg,#f00 1px,transparent 1px) 0 0/4px 1px repeat-x,linear-gradient(90deg,transparent 1px,#f00 1px,#f00 2px,transparent 2px,transparent 3px,#f00 3px) 0 1px/4px 1px repeat-x,linear-gradient(90deg,transparent 2px,#f00 2px,#f00 3px,transparent 3px) 0 2px/4px 1px repeat-x"></div>
<div class="ln" style="top:577px">33</div>
<div class="cl" style="top:577px;left:111px"><span class="t">&lt;p&gt;</span><span class="tx">Empresa</span><span class="tx"> GIM-PRO</span><span class="t">&lt;/p&gt;</span></div>
<div class="a" style="left:135px;top:589px;width:56px;height:3px;background:linear-gradient(90deg,#f00 1px,transparent 1px) 0 0/4px 1px repeat-x,linear-gradient(90deg,transparent 1px,#f00 1px,#f00 2px,transparent 2px,transparent 3px,#f00 3px) 0 1px/4px 1px repeat-x,linear-gradient(90deg,transparent 2px,#f00 2px,#f00 3px,transparent 3px) 0 2px/4px 1px repeat-x"></div>
<div class="ln" style="top:595px">34</div>
<div class="cl" style="top:595px;left:47px"></div>
<div class="ln" style="top:613px">35</div>
<div class="cl" style="top:613px;left:111px"><span class="t">&lt;form </span><span class="at">onsubmit</span><span class="tx">=</span><span class="ds">&quot;iniciarSesion(event)&quot;</span><span class="t">&gt;</span></div>
<div class="ln" style="top:631px">36</div>
<div class="cl" style="top:631px;left:143px"><span class="t">&lt;label&gt;</span><span class="tx">Usuario</span><span class="t">&lt;/label&gt;</span></div>
<div class="a" style="left:199px;top:643px;width:56px;height:3px;background:linear-gradient(90deg,#f00 1px,transparent 1px) 0 0/4px 1px repeat-x,linear-gradient(90deg,transparent 1px,#f00 1px,#f00 2px,transparent 2px,transparent 3px,#f00 3px) 0 1px/4px 1px repeat-x,linear-gradient(90deg,transparent 2px,#f00 2px,#f00 3px,transparent 3px) 0 2px/4px 1px repeat-x"></div>
<div class="ln" style="top:649px">37</div>
<div class="cl" style="top:649px;left:143px"><span class="t">&lt;input </span><span class="at">type</span><span class="tx">=</span><span class="ds">&quot;text&quot;</span><span class="t"> </span><span class="at">id</span><span class="tx">=</span><span class="ds">&quot;</span><span class="ds">Usuario</span><span class="ds">&quot;</span><span class="tx"> required</span><span class="t">&gt;&lt;br&gt;&lt;</span></div>
<div class="a" style="left:327px;top:661px;width:56px;height:3px;background:linear-gradient(90deg,#f00 1px,transparent 1px) 0 0/4px 1px repeat-x,linear-gradient(90deg,transparent 1px,#f00 1px,#f00 2px,transparent 2px,transparent 3px,#f00 3px) 0 1px/4px 1px repeat-x,linear-gradient(90deg,transparent 2px,#f00 2px,#f00 3px,transparent 3px) 0 2px/4px 1px repeat-x"></div>
</div>
<div class="a" style="left:1422px;top:128px;width:1px;height:682px;background:#fff"></div>
<div class="a" style="left:1423px;top:128px;width:13px;height:682px;background:#f0f0f0"></div>
<svg class="a" style="left:1426px;top:133px" width="9" height="8"><path d="M1 6.5L4.5 2.5L8 6.5" fill="none" stroke="#505050" stroke-width="2"/></svg>
<div class="a" style="left:1423px;top:145px;width:13px;height:589px;background:#cdcdcd"></div>
<svg class="a" style="left:1426px;top:795px" width="9" height="8"><path d="M1 1.5L4.5 5.5L8 1.5" fill="none" stroke="#505050" stroke-width="2"/></svg>
<div class="a" style="left:721px;top:807px;width:701px;height:1px;background:#fff"></div>
<div class="a" style="left:726px;top:808px;width:696px;height:2px;background:#efefef"></div>
<div class="a" style="left:738px;top:808px;width:377px;height:2px;background:#c6c6c6"></div>
</body></html>
